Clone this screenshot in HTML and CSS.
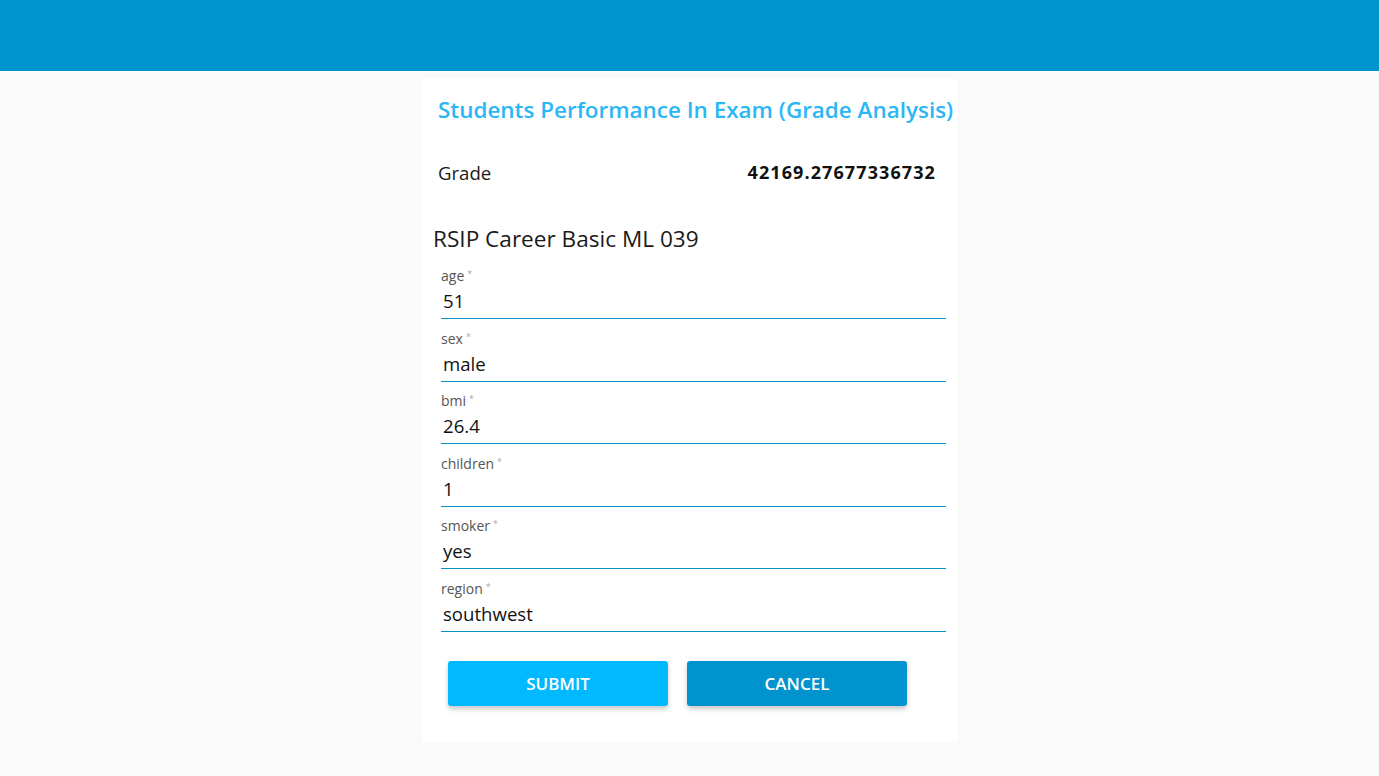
FILE: index.html
```html
<!DOCTYPE html>
<html>
<head>
<meta charset="utf-8">
<link rel="stylesheet" href="styles.css">
</head>
<body>
<header class="topbar"></header>
<main class="page">
  <section class="card">
    <h1 class="title">Students Performance In Exam (Grade Analysis)</h1>
    <div class="result">
      <span class="result-label">Grade</span>
      <span class="result-value">42169.27677336732</span>
    </div>
    <h2 class="form-title">RSIP Career Basic ML 039</h2>
    <form class="form">
      <div class="field"><label class="field-label">age<span class="req">*</span></label><div class="field-value">51</div></div>
      <div class="field"><label class="field-label">sex<span class="req">*</span></label><div class="field-value">male</div></div>
      <div class="field"><label class="field-label">bmi<span class="req">*</span></label><div class="field-value">26.4</div></div>
      <div class="field"><label class="field-label">children<span class="req">*</span></label><div class="field-value">1</div></div>
      <div class="field"><label class="field-label">smoker<span class="req">*</span></label><div class="field-value">yes</div></div>
      <div class="field"><label class="field-label">region<span class="req">*</span></label><div class="field-value">southwest</div></div>
      <div class="actions">
        <button type="button" class="btn btn-submit">SUBMIT</button>
        <button type="button" class="btn btn-cancel">CANCEL</button>
      </div>
    </form>
  </section>
</main>
</body>
</html>
```
FILE: styles.css
```css
* { box-sizing: border-box; }
html, body { margin: 0; padding: 0; }
body {
  background: #fafafa;
  font-family: "Open Sans", "Noto Sans", sans-serif;
  color: #1a1a1a;
  height: 776px;
  overflow: hidden;
}
.topbar {
  height: 71px;
  background: #0095cf;
}
.page {
  display: flex;
  justify-content: center;
  padding-top: 8px;
}
.card {
  width: 535px;
  height: 663px;
  background: #fff;
  display: flex;
  flex-direction: column;
}
.title {
  margin: 16px 0 0 16px;
  font-size: 22.45px;
  font-weight: 600;
  color: #2bb6f5;
  line-height: 30px;
  white-space: nowrap;
  letter-spacing: 0;
}
.result {
  display: flex;
  justify-content: space-between;
  align-items: center;
  margin: 32px 22px 0 16px;
  height: 30px;
}
.result-label {
  font-size: 18.6px;
  color: #1a1a1a;
}
.result-value {
  font-size: 18px;
  font-weight: 700;
  color: #111;
  letter-spacing: 1.1px;
  margin-right: -1px;
}
.form-title {
  margin: 37px 0 0 11px;
  font-size: 22.6px;
  font-weight: 400;
  line-height: 30px;
  color: #1a1a1a;
}
.form {
  display: flex;
  flex-direction: column;
  margin: 4px 11px 0 19px;
}
.field {
  height: 62.6px;
  display: flex;
  flex-direction: column;
  justify-content: flex-end;
  border-bottom: 1px solid #0a93c6;
}
.field:first-child { height: 61px; }
.field-label {
  font-size: 14px;
  color: #555;
  line-height: 18px;
  margin-bottom: 3px;
}
.req {
  font-size: 9px;
  color: #aaa;
  vertical-align: top;
  margin-left: 3px;
  position: relative;
  top: -2px;
}
.field-value {
  font-size: 18.6px;
  line-height: 26px;
  padding: 0 2px 4px;
  color: #111;
}
.actions {
  display: flex;
  gap: 19px;
  margin: 29px 0 0 7px;
}
.btn {
  width: 220px;
  height: 45px;
  border: none;
  border-radius: 3px;
  color: #fff;
  font-family: "Open Sans", "Noto Sans", sans-serif;
  font-size: 17px;
  font-weight: 600;
  box-shadow: 0 3px 5px rgba(0,0,0,0.22);
}
.btn-submit { background: #00b9fe; }
.btn-cancel { background: #0093cd; }
```
